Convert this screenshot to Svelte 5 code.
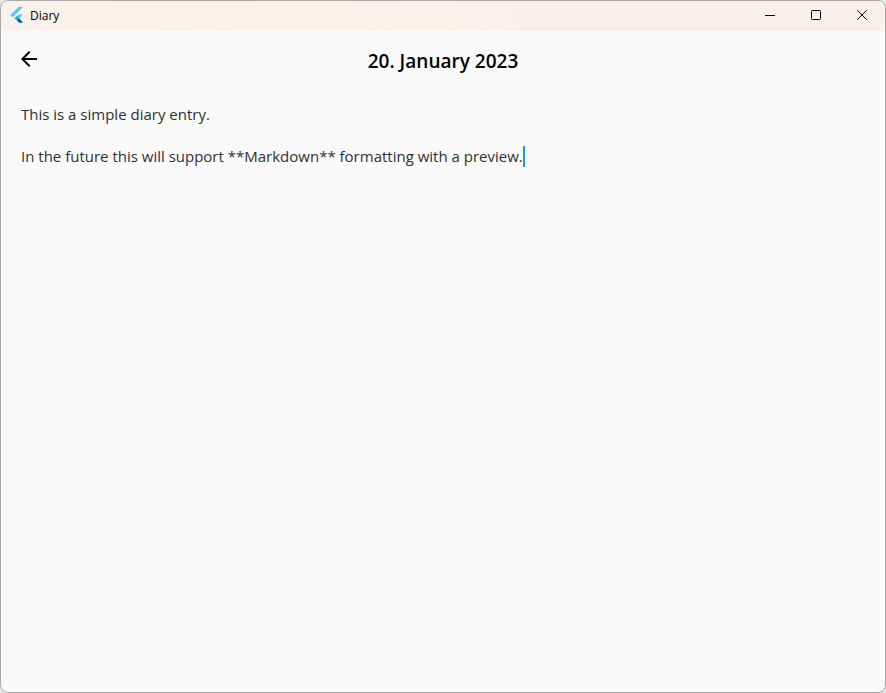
<script>
  let entry = $state(
    'This is a simple diary entry.\n\nIn the future this will support **Markdown** formatting with a preview.'
  );
  let caret = $state(entry.length);
  let beforeCaret = $derived(entry.slice(0, caret));

  function trackCaret(event) {
    caret = event.currentTarget.selectionEnd;
  }
</script>

<div class="window">
  <header class="titlebar">
    <svg class="logo" width="14" height="16" viewBox="0 0 14 16" aria-hidden="true">
      <path d="M8.6 0H13L2.6 10.2L0.2 8Z" fill="#54c5f8" />
      <path d="M8.6 7.4H13L9.2 11.2L7 13.4L4.6 11.2Z" fill="#54c5f8" />
      <path d="M4.6 11.2L7 9L9.2 11.2L7 13.4Z" fill="#29a3e8" />
      <path d="M7 13.4L9.2 11.2L13 15.8H9.2Z" fill="#01579b" />
    </svg>
    <span class="name">Diary</span>
    <div class="controls">
      <button type="button" aria-label="Minimize">
        <svg width="10" height="10" viewBox="0 0 10 10"><path d="M0 5.5H10" /></svg>
      </button>
      <button type="button" aria-label="Maximize">
        <svg width="10" height="10" viewBox="0 0 10 10"><rect x="0.5" y="0.5" width="9" height="9" rx="0.8" /></svg>
      </button>
      <button type="button" aria-label="Close">
        <svg width="10" height="10" viewBox="0 0 10 10"><path d="M0.2 0.2L9.8 9.8M9.8 0.2L0.2 9.8" /></svg>
      </button>
    </div>
  </header>

  <div class="appbar">
    <button class="back" type="button" aria-label="Back">
      <svg width="24" height="24" viewBox="0 0 24 24">
        <path d="M20 11H7.83l5.59-5.59L12 4l-8 8 8 8 1.41-1.41L7.83 13H20v-2z" />
      </svg>
    </button>
    <h1>20. January 2023</h1>
  </div>

  <main class="editor">
    <textarea
      aria-label="Diary entry"
      spellcheck="false"
      bind:value={entry}
      oninput={trackCaret}
      onkeyup={trackCaret}
      onclick={trackCaret}
    ></textarea>
    <div class="mirror" aria-hidden="true">{beforeCaret}<span class="caret"></span></div>
  </main>
</div>

<style>
  :global(body) {
    background: #e6e6e6;
  }

  .window {
    box-sizing: border-box;
    display: flex;
    flex-direction: column;
    min-height: 100vh;
    overflow: hidden;
    border: 1px solid #a9a9a9;
    border-radius: 8px;
    background: #fafafa;
    color: #000;
    font-family: 'Segoe UI', 'Open Sans', 'Noto Sans', sans-serif;
  }

  .titlebar {
    display: flex;
    align-items: center;
    height: 30px;
    padding-left: 9px;
    background: linear-gradient(90deg, #f9f1eb, #fbf0ea 35%, #f9f0ee 60%, #f9f0ee);
  }

  .logo {
    flex: none;
    margin-right: 6px;
    padding-bottom: 2px;
  }

  .name {
    font-size: 12px;
    line-height: 16px;
  }

  .controls {
    display: flex;
    height: 100%;
    margin-left: auto;
  }

  button {
    display: flex;
    align-items: center;
    justify-content: center;
    padding: 0;
    border: 0;
    background: none;
    color: inherit;
  }

  .controls button {
    width: 46px;
    padding-bottom: 2px;
  }

  .controls svg {
    fill: none;
    stroke: #000;
    stroke-width: 1;
  }

  .appbar {
    display: grid;
    grid-template-columns: 56px 1fr 56px;
    align-items: center;
    height: 56px;
  }

  .back {
    height: 56px;
    fill: #000;
  }

  h1 {
    margin: 0;
    padding-top: 4px;
    font-size: 19px;
    font-weight: 600;
    line-height: 24px;
    text-align: center;
  }

  .editor {
    display: grid;
    flex: 1;
    padding: 17px 20px 20px;
  }

  textarea,
  .mirror {
    grid-area: 1 / 1;
    margin: 0;
    padding: 0;
    border: 0;
    background: none;
    color: #303030;
    font: 400 15px/21px 'Segoe UI', 'Open Sans', 'Noto Sans', sans-serif;
    white-space: pre-wrap;
    overflow-wrap: break-word;
  }

  textarea {
    resize: none;
    outline: none;
    caret-color: transparent;
  }

  .mirror {
    visibility: hidden;
    pointer-events: none;
  }

  .caret {
    display: inline-block;
    visibility: visible;
    width: 2px;
    height: 21px;
    margin-right: -2px;
    vertical-align: top;
    background: #2196f3;
  }
</style>
